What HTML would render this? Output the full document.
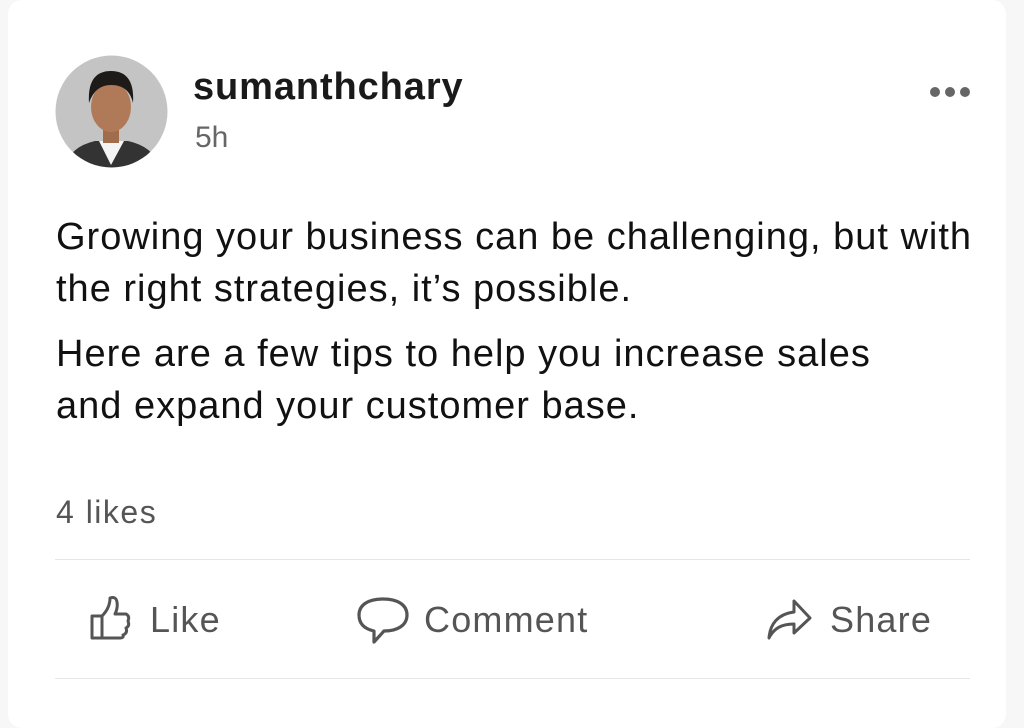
<!DOCTYPE html>
<html><head><style>
body{margin:0;width:1024px;height:728px;background:#f7f7f7;font-family:"Liberation Sans",sans-serif;overflow:hidden;position:relative}
.card{position:absolute;left:8px;top:0;width:998px;height:728px;background:#fff;border-radius:14px}
.t{position:absolute;white-space:nowrap}
.hr{position:absolute;left:55px;width:915px;height:1px;background:#e6e6e6}
.act{font-size:36px;color:#555;letter-spacing:1.2px}
</style></head><body>
<div class="card"></div>
<svg style="position:absolute;left:55px;top:55px" width="113" height="113" viewBox="0 0 113 113">
<defs><clipPath id="c"><circle cx="56.5" cy="56.5" r="56"/></clipPath></defs>
<circle cx="56.5" cy="56.5" r="56" fill="#c4c4c4"/>
<g clip-path="url(#c)">
<path d="M10 113 Q14 92 40 86 L73 86 Q100 92 104 113Z" fill="#333"/>
<path d="M44 86 L56 110 L69 86Z" fill="#f4f4f4"/>
<rect x="48" y="70" width="16" height="18" fill="#a06c4c"/>
<ellipse cx="56" cy="52" rx="20" ry="25" fill="#b07a58"/>
<path d="M34 48 Q32 16 56 16 Q80 16 78 48 Q74 30 56 30 Q40 30 34 48Z" fill="#1e1a18"/>
</g></svg>
<div class="t" style="left:193px;top:66px;font-size:38px;font-weight:bold;color:#1a1a1a;letter-spacing:0.9px">sumanthchary</div>
<div class="t" style="left:195px;top:121px;font-size:30px;color:#666">5h</div>
<svg style="position:absolute;left:928px;top:85px" width="44" height="14"><circle cx="7" cy="7" r="5" fill="#666"/><circle cx="22" cy="7" r="5" fill="#666"/><circle cx="37" cy="7" r="5" fill="#666"/></svg>
<div class="t" style="left:56px;top:211px;font-size:38px;line-height:52px;color:#111;letter-spacing:1px">Growing your business can be challenging, but with<br>the right strategies, it’s possible.</div>
<div class="t" style="left:56px;top:328px;font-size:38px;line-height:52px;color:#111;letter-spacing:1px">Here are a few tips to help you increase sales<br>and expand your customer base.</div>
<div class="t" style="left:56px;top:494px;font-size:32px;color:#555;letter-spacing:1.5px">4 likes</div>
<div class="hr" style="top:559px"></div>
<div class="hr" style="top:678px"></div>
<svg style="position:absolute;left:88px;top:594px" width="44" height="48" viewBox="0 0 44 48" fill="none" stroke="#555" stroke-width="3" stroke-linejoin="round">
<path d="M4 22 L14 22 L14 44 L4 44 Z"/><path d="M14 22 Q22 14 22 4 Q28 2 29 8 Q30 14 27 20 L38 20 Q42 22 40 27 Q42 32 38 34 Q40 39 35 41 Q36 44 32 44 L14 44"/></svg>
<div class="t act" style="left:150px;top:599px">Like</div>
<svg style="position:absolute;left:356px;top:596px" width="54" height="48" viewBox="0 0 54 48" fill="none" stroke="#555" stroke-width="3.2" stroke-linejoin="round">
<path d="M27 3 C12 3 3 9 3 19 C3 28 9 33 18 35 L18 46 L28 35 C42 35 51 29 51 19 C51 9 42 3 27 3Z"/></svg>
<div class="t act" style="left:424px;top:599px">Comment</div>
<svg style="position:absolute;left:766px;top:598px" width="46" height="44" viewBox="0 0 46 44" fill="none" stroke="#555" stroke-width="3" stroke-linejoin="round">
<path d="M28 3 L44 20 L28 35 L28 26 C16 26 8 30 3 40 C4 26 12 16 28 14 Z"/></svg>
<div class="t act" style="left:830px;top:599px">Share</div>
</body></html>
